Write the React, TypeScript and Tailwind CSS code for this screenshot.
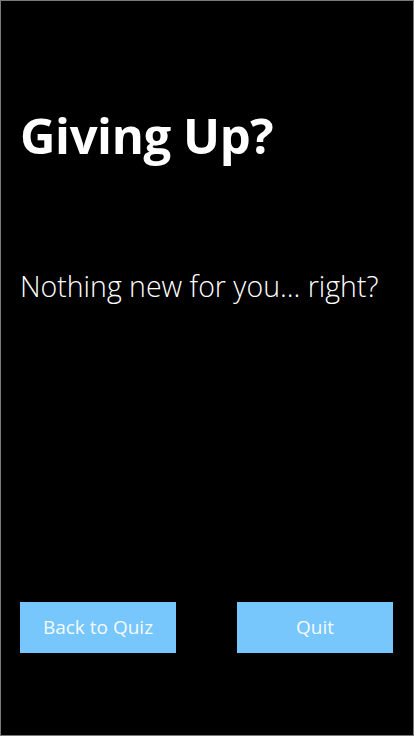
import React from "react";

export default function App() {
  return (
    <div
      className="flex h-[736px] w-[414px] flex-col border border-[#7a7a7a] bg-black text-white"
      style={{ fontFamily: '"Open Sans", "Noto Sans", sans-serif' }}
    >
      <h1 className="mt-[101px] pl-[19px] text-[49px] font-bold leading-[66px] tracking-[-0.4px]">
        Giving Up?
      </h1>
      <p className="mt-[99px] pl-[19px] text-[28.5px] font-light leading-[38px]">
        Nothing new for you... right?
      </p>
      <div className="mt-auto mb-[82px] flex justify-between pl-[19px] pr-[20px]">
        <button className="h-[51px] w-[156px] bg-[#77c6fc] text-[19px] text-[#f4faff]">
          Back to Quiz
        </button>
        <button className="h-[51px] w-[156px] bg-[#77c6fc] text-[19px] text-[#f4faff]">
          Quit
        </button>
      </div>
    </div>
  );
}
